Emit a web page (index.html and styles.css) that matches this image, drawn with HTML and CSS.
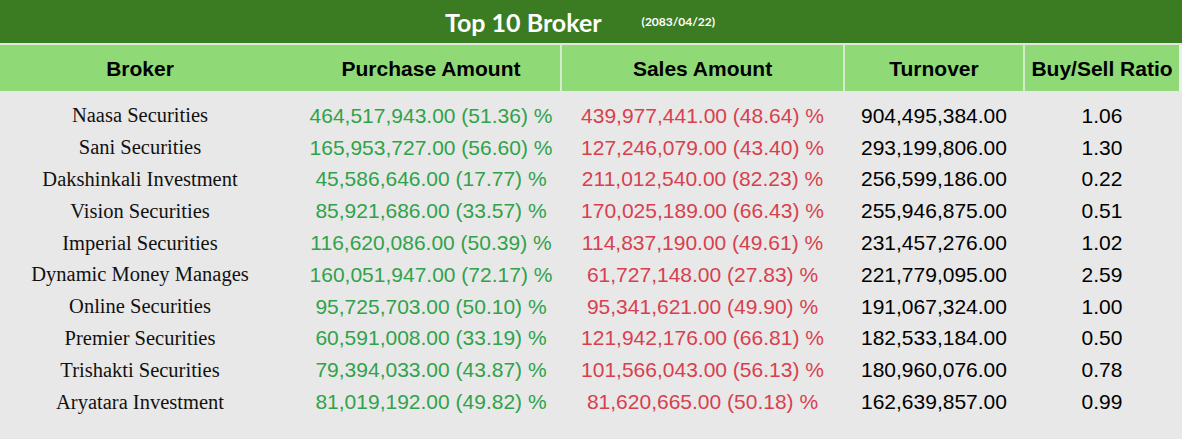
FILE: index.html
```html
<!DOCTYPE html>
<html lang="en">
<head>
<meta charset="utf-8">
<title>Top 10 Broker</title>
<link rel="stylesheet" href="styles.css">
</head>
<body>
<div class="board">
  <div class="title-bar">
    <span class="title">Top 10 Broker</span>
    <span class="date">(2083/04/22)</span>
  </div>
  <div class="row head">
    <div class="cell c1">Broker</div>
    <div class="cell c2">Purchase Amount</div>
    <div class="cell c3">Sales Amount</div>
    <div class="cell c4">Turnover</div>
    <div class="cell c5">Buy/Sell Ratio</div>
  </div>
  <div class="body">
    <div class="row data"><div class="cell c1 name">Naasa Securities</div><div class="cell c2 buy">464,517,943.00 (51.36) %</div><div class="cell c3 sell">439,977,441.00 (48.64) %</div><div class="cell c4">904,495,384.00</div><div class="cell c5">1.06</div></div>
    <div class="row data"><div class="cell c1 name">Sani Securities</div><div class="cell c2 buy">165,953,727.00 (56.60) %</div><div class="cell c3 sell">127,246,079.00 (43.40) %</div><div class="cell c4">293,199,806.00</div><div class="cell c5">1.30</div></div>
    <div class="row data"><div class="cell c1 name">Dakshinkali Investment</div><div class="cell c2 buy">45,586,646.00 (17.77) %</div><div class="cell c3 sell">211,012,540.00 (82.23) %</div><div class="cell c4">256,599,186.00</div><div class="cell c5">0.22</div></div>
    <div class="row data"><div class="cell c1 name">Vision Securities</div><div class="cell c2 buy">85,921,686.00 (33.57) %</div><div class="cell c3 sell">170,025,189.00 (66.43) %</div><div class="cell c4">255,946,875.00</div><div class="cell c5">0.51</div></div>
    <div class="row data"><div class="cell c1 name">Imperial Securities</div><div class="cell c2 buy">116,620,086.00 (50.39) %</div><div class="cell c3 sell">114,837,190.00 (49.61) %</div><div class="cell c4">231,457,276.00</div><div class="cell c5">1.02</div></div>
    <div class="row data"><div class="cell c1 name">Dynamic Money Manages</div><div class="cell c2 buy">160,051,947.00 (72.17) %</div><div class="cell c3 sell">61,727,148.00 (27.83) %</div><div class="cell c4">221,779,095.00</div><div class="cell c5">2.59</div></div>
    <div class="row data"><div class="cell c1 name">Online Securities</div><div class="cell c2 buy">95,725,703.00 (50.10) %</div><div class="cell c3 sell">95,341,621.00 (49.90) %</div><div class="cell c4">191,067,324.00</div><div class="cell c5">1.00</div></div>
    <div class="row data"><div class="cell c1 name">Premier Securities</div><div class="cell c2 buy">60,591,008.00 (33.19) %</div><div class="cell c3 sell">121,942,176.00 (66.81) %</div><div class="cell c4">182,533,184.00</div><div class="cell c5">0.50</div></div>
    <div class="row data"><div class="cell c1 name">Trishakti Securities</div><div class="cell c2 buy">79,394,033.00 (43.87) %</div><div class="cell c3 sell">101,566,043.00 (56.13) %</div><div class="cell c4">180,960,076.00</div><div class="cell c5">0.78</div></div>
    <div class="row data"><div class="cell c1 name">Aryatara Investment</div><div class="cell c2 buy">81,019,192.00 (49.82) %</div><div class="cell c3 sell">81,620,665.00 (50.18) %</div><div class="cell c4">162,639,857.00</div><div class="cell c5">0.99</div></div>
  </div>
</div>
</body>
</html>
```
FILE: styles.css
```css
html, body {
  margin: 0;
  padding: 0;
  background: #e8e8e8;
}

.board {
  width: 1182px;
  height: 439px;
  background: #e8e8e8;
  font-family: "Liberation Sans", Arial, sans-serif;
  color: #000;
}

.title-bar {
  height: 45px;
  background: #3b7b22;
  background-clip: padding-box;
  display: flex;
  justify-content: center;
  align-items: flex-start;
  box-sizing: border-box;
  padding-top: 7px;
  padding-right: 22px;
  border-bottom: 2px solid #dfe6dc;
}

.title {
  font-family: Lato, "Open Sans", sans-serif;
  font-weight: 700;
  font-size: 25px;
  line-height: 30px;
  color: #ffffff;
}

.date {
  font-family: Lato, "Open Sans", sans-serif;
  font-weight: 700;
  font-size: 12px;
  line-height: 14px;
  color: #ffffff;
  margin-left: 40px;
  margin-top: 8px;
}

.row {
  display: grid;
  grid-template-columns: 280px 282px 283px 180px 157px;
}

.cell {
  display: flex;
  align-items: center;
  justify-content: center;
  white-space: nowrap;
  box-sizing: border-box;
}

.c2 {
  padding-left: 22px;
  border-right: 2px solid transparent;
}

.c3, .c4 {
  border-right: 2px solid transparent;
}

.c5 {
  border-right: 3px solid transparent;
}

.head {
  height: 46px;
}

.head .cell {
  background: #8fda76;
  background-clip: padding-box;
  font-weight: 700;
  font-size: 21px;
  padding-top: 2px;
}

.head .c2, .head .c3, .head .c4 {
  border-right-color: #d4ebcc;
}

.head .c5 {
  border-right-color: #ececec;
}

.body {
  padding-top: 9px;
}

.data {
  height: 31.8px;
  font-size: 21px;
}

.name {
  font-family: "Liberation Serif", "Times New Roman", serif;
  font-size: 20.5px;
  color: #111;
}

.buy {
  color: #30a24a;
}

.sell {
  color: #d8404e;
}
```
